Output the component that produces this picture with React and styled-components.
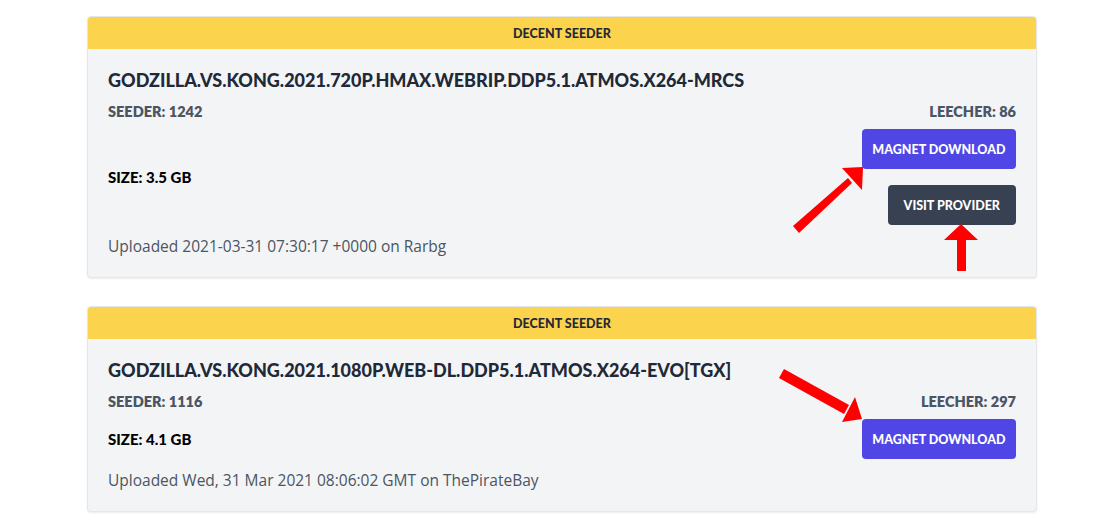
import React from "react";
import styled, { createGlobalStyle } from "styled-components";

const torrents = [
  {
    id: 1,
    label: "Decent Seeder",
    title: "GODZILLA.VS.KONG.2021.720P.HMAX.WEBRIP.DDP5.1.ATMOS.X264-MRCS",
    seeder: 1242,
    leecher: 86,
    size: "3.5 GB",
    uploaded: "Uploaded 2021-03-31 07:30:17 +0000 on Rarbg",
    provider: true,
  },
  {
    id: 2,
    label: "Decent Seeder",
    title: "GODZILLA.VS.KONG.2021.1080P.WEB-DL.DDP5.1.ATMOS.X264-EVO[TGX]",
    seeder: 1116,
    leecher: 297,
    size: "4.1 GB",
    uploaded: "Uploaded Wed, 31 Mar 2021 08:06:02 GMT on ThePirateBay",
    provider: false,
  },
];

export default function App() {
  return (
    <>
      <GlobalStyle />
      <Page>
        {torrents.map((t) => (
          <Card key={t.id}>
            <Badge>{t.label}</Badge>
            <Body>
              <Title>{t.title}</Title>
              <Meta>
                <span>SEEDER: {t.seeder}</span>
                <span>LEECHER: {t.leecher}</span>
              </Meta>
              <Middle>
                <Size>SIZE: {t.size}</Size>
                <Actions>
                  <Button>Magnet Download</Button>
                  {t.provider && <Button dark>Visit Provider</Button>}
                </Actions>
              </Middle>
              <Uploaded>{t.uploaded}</Uploaded>
            </Body>
          </Card>
        ))}
        <Arrows width="1119" height="532" viewBox="0 0 1119 532">
          <g fill="#ff0000">
            <polygon points="793,226 799,233 852,183 848,178" />
            <polygon points="863,167 842,168 862,190" />
            <rect x="957" y="238" width="9" height="33" />
            <polygon points="961,224 944,240 978,240" />
            <polygon points="779,378 784,369 849,405 844,414" />
            <polygon points="862,419 855,397 842,422" />
          </g>
        </Arrows>
      </Page>
    </>
  );
}

const GlobalStyle = createGlobalStyle`
  body {
    margin: 0;
    background: #ffffff;
    font-family: "Lato", sans-serif;
  }
`;

const Page = styled.div`
  position: relative;
  display: flex;
  flex-direction: column;
  gap: 28px;
  padding: 16px 0 0 87px;
  height: 532px;
  box-sizing: border-box;
`;

const Card = styled.div`
  width: 948px;
  background: #f3f4f6;
  border: 1px solid #e5e7eb;
  border-radius: 4px;
  box-shadow: 0 1px 2px rgba(0, 0, 0, 0.08);
  overflow: hidden;
`;

const Badge = styled.div`
  height: 32px;
  display: flex;
  align-items: center;
  justify-content: center;
  background: #fcd34d;
  color: #1f2937;
  font-size: 12.5px;
  font-weight: 900;
  text-transform: uppercase;
`;

const Body = styled.div`
  padding: 17px 20px 20px;
`;

const Title = styled.h2`
  margin: 0;
  font-size: 18px;
  line-height: 28px;
  font-weight: 900;
  color: #1f2937;
`;

const Meta = styled.div`
  margin-top: 7px;
  display: flex;
  justify-content: space-between;
  font-size: 14.5px;
  line-height: 22px;
  font-weight: 800;
  color: #4b5563;
`;

const Middle = styled.div`
  margin-top: 6px;
  display: flex;
  justify-content: space-between;
  align-items: center;
`;

const Size = styled.div`
  font-size: 15px;
  font-weight: 900;
  color: #000;
`;

const Actions = styled.div`
  display: flex;
  flex-direction: column;
  align-items: flex-end;
  gap: 16px;
`;

const Button = styled.button`
  height: 40px;
  border: none;
  border-radius: 4px;
  background: ${(p) => (p.dark ? "#374151" : "#4f46e5")};
  color: #fff;
  font-family: "Lato", sans-serif;
  font-size: 12.5px;
  font-weight: 900;
  text-transform: uppercase;
  padding: ${(p) => (p.dark ? "0 16px" : "0 10.5px")};
`;

const Uploaded = styled.div`
  margin-top: 10px;
  font-family: "Open Sans", sans-serif;
  font-size: 15.5px;
  line-height: 22px;
  color: #4b5563;
`;

const Arrows = styled.svg`
  position: absolute;
  top: 0;
  left: 0;
  pointer-events: none;
`;
